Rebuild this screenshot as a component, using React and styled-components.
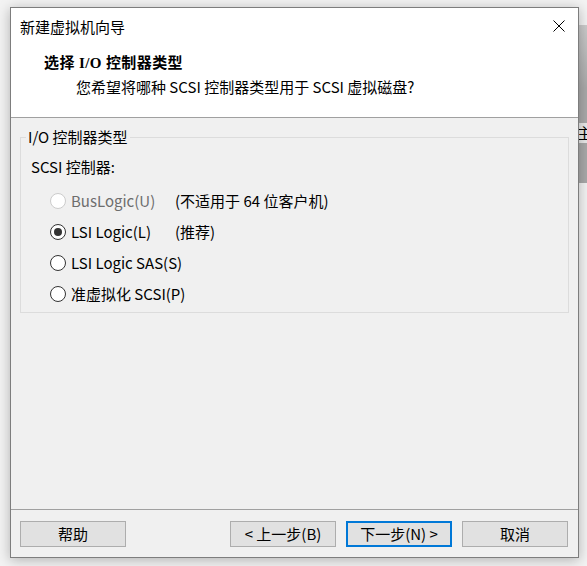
import React from "react";
import styled, { createGlobalStyle, css } from "styled-components";

const GlobalStyle = createGlobalStyle`
  html, body {
    margin: 0;
    padding: 0;
    background: #f3f3f3;
    font-family: "Noto Sans CJK SC", "Noto Sans", sans-serif;
    font-size: 15px;
    color: #000;
  }
  #root { height: 566px; }
`;

const Desktop = styled.div`
  position: relative;
  width: 587px;
  height: 566px;
  overflow: hidden;
  background: #f3f3f3;
  padding: 7px 0 0 10px;
  box-sizing: border-box;
`;

const BehindWindow = styled.div`
  position: absolute;
  left: 576px;
  top: 25px;
  width: 40px;
  height: 158px;
  background: linear-gradient(#cbcbcb, #a9a9a9 40%, #a9a9a9);
  overflow: hidden;
`;

const BehindText = styled.span`
  position: absolute;
  left: 1px;
  top: 98px;
  font-size: 15px;
  line-height: 20px;
  color: #000;
  background: #e9e9e9;
`;

const Window = styled.div`
  position: relative;
  z-index: 1;
  width: 569px;
  height: 551px;
  box-sizing: border-box;
  border: 1px solid #7d7d7d;
  background: #fff;
  display: flex;
  flex-direction: column;
  box-shadow: 0 2px 12px rgba(0, 0, 0, 0.28);
`;

const TitleBar = styled.div`
  height: 38px;
  flex: none;
  display: flex;
  align-items: center;
  justify-content: space-between;
  padding: 0 13px 0 9px;
  background: #fff;
`;

const TitleText = styled.span`
  font-size: 15px;
  line-height: 20px;
  color: #000;
`;

const CloseIcon = styled.svg`
  width: 12px;
  height: 12px;
  display: block;
  margin-top: -2px;
`;

const Header = styled.div`
  flex: none;
  padding: 7px 0 20px 33px;
  background: #fff;
  border-bottom: 1px solid #a0a0a0;
`;

const HeaderTitle = styled.div`
  font-family: "Liberation Serif", "Noto Sans CJK SC", serif;
  font-weight: bold;
  font-size: 15px;
  line-height: 20px;
  letter-spacing: 0.4px;
`;

const HeaderSub = styled.div`
  margin-top: 4px;
  padding-left: 32px;
  font-size: 15px;
  line-height: 20px;
  white-space: nowrap;
`;

const Body = styled.div`
  flex: 1;
  background: #f0f0f0;
  padding: 9px 9px 0 9px;
`;

const GroupBox = styled.fieldset`
  margin: 0;
  border: 1px solid #dcdcdc;
  padding: 0 10px 3px 10px;
  min-width: 0;
`;

const Legend = styled.legend`
  padding: 0 2px;
  margin-left: -5px;
  font-size: 15px;
  line-height: 20px;
`;

const FieldLabel = styled.div`
  margin-top: 10px;
  line-height: 20px;
`;

const OptionGrid = styled.div`
  margin-top: 8px;
  padding-left: 19px;
  display: grid;
  grid-template-columns: 125px auto;
  grid-auto-rows: 31px;
  align-items: center;
`;

const RadioLabel = styled.label`
  display: flex;
  align-items: center;
  gap: 5px;
  line-height: 20px;
  white-space: nowrap;
  color: ${(p) => (p.$disabled ? "#6d6d6d" : "#000")};
`;

const RadioCircle = styled.span`
  width: 16px;
  height: 16px;
  box-sizing: border-box;
  border-radius: 50%;
  background: #fff;
  border: 1.5px solid ${(p) => (p.$disabled ? "#cccccc" : "#333")};
  display: flex;
  align-items: center;
  justify-content: center;
  flex: none;
  ${(p) =>
    p.$checked &&
    css`
      &::after {
        content: "";
        width: 8px;
        height: 8px;
        border-radius: 50%;
        background: #333;
      }
    `}
`;

const Note = styled.span`
  line-height: 20px;
  white-space: nowrap;
`;

const Footer = styled.div`
  flex: none;
  background: #f0f0f0;
  border-top: 1px solid #a0a0a0;
  padding: 11px 10px 10px 9px;
  display: flex;
  align-items: center;
`;

const Spacer = styled.div`
  flex: 1;
`;

const ButtonGroup = styled.div`
  display: flex;
  gap: 10px;
`;

const Button = styled.button`
  width: 106px;
  height: 26px;
  box-sizing: border-box;
  margin: 0;
  padding: 0;
  background: #e1e1e1;
  border: ${(p) => (p.$default ? "2px solid #0078d7" : "1px solid #adadad")};
  font-family: "Noto Sans CJK SC", "Noto Sans", sans-serif;
  font-size: 15px;
  line-height: 20px;
  color: #000;
  white-space: pre;
  display: flex;
  align-items: center;
  justify-content: center;
`;

const options = [
  { label: "BusLogic(U)", note: "(不适用于 64 位客户机)", disabled: true },
  { label: "LSI Logic(L)", note: "(推荐)", checked: true },
  { label: "LSI Logic SAS(S)" },
  { label: "准虚拟化 SCSI(P)" },
];

export default function App() {
  return (
    <>
      <GlobalStyle />
      <Desktop>
        <BehindWindow>
          <BehindText>主</BehindText>
        </BehindWindow>
        <Window>
          <TitleBar>
            <TitleText>新建虚拟机向导</TitleText>
            <CloseIcon viewBox="0 0 12 12">
              <path d="M0.5 0.5 L11.5 11.5 M11.5 0.5 L0.5 11.5" stroke="#000" strokeWidth="1" fill="none" />
            </CloseIcon>
          </TitleBar>
          <Header>
            <HeaderTitle>选择 I/O 控制器类型</HeaderTitle>
            <HeaderSub>您希望将哪种 SCSI 控制器类型用于 SCSI 虚拟磁盘?</HeaderSub>
          </Header>
          <Body>
            <GroupBox>
              <Legend>I/O 控制器类型</Legend>
              <FieldLabel>SCSI 控制器:</FieldLabel>
              <OptionGrid>
                {options.map((o) => (
                  <React.Fragment key={o.label}>
                    <RadioLabel $disabled={o.disabled}>
                      <RadioCircle $disabled={o.disabled} $checked={o.checked} />
                      {o.label}
                    </RadioLabel>
                    <Note>{o.note || ""}</Note>
                  </React.Fragment>
                ))}
              </OptionGrid>
            </GroupBox>
          </Body>
          <Footer>
            <Button>帮助</Button>
            <Spacer />
            <ButtonGroup>
              <Button>&lt; 上一步(B)</Button>
              <Button $default>下一步(N) &gt;</Button>
              <Button>取消</Button>
            </ButtonGroup>
          </Footer>
        </Window>
      </Desktop>
    </>
  );
}
